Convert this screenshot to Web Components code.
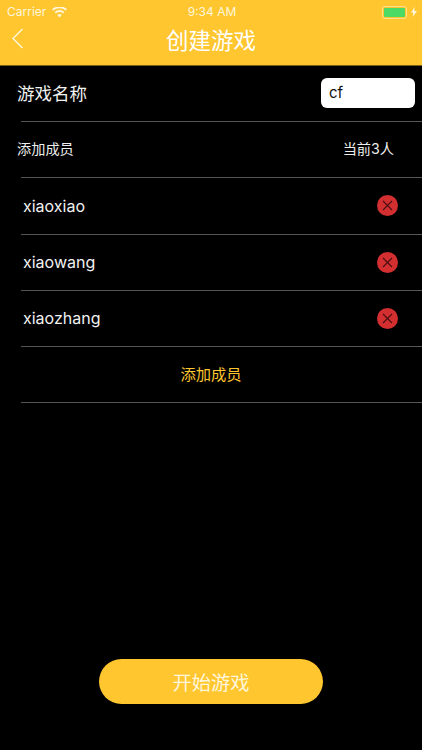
<!DOCTYPE html>
<html lang="zh">
<head>
<meta charset="utf-8">
<title>创建游戏</title>
<style>
  html, body { margin: 0; height: 100%; background: #000; }
  body { font-family: "Inter", "Noto Sans CJK SC", sans-serif; }
</style>
</head>
<body>
<game-screen>
  <nav-bar slot="top" title="创建游戏"></nav-bar>
  <name-row></name-row>
  <count-row count="当前3人"></count-row>
  <member-row name="xiaoxiao"></member-row>
  <member-row name="xiaowang"></member-row>
  <member-row name="xiaozhang"></member-row>
  <add-row></add-row>
  <start-button slot="bottom">开始游戏</start-button>
</game-screen>

<script>
const CJK = '"Noto Sans CJK SC", sans-serif';
const LATIN = '"Inter", "Noto Sans CJK SC", sans-serif';

class GameScreen extends HTMLElement {
  constructor() {
    super();
    this.attachShadow({ mode: 'open' }).innerHTML = `
      <style>
        :host { display: flex; flex-direction: column; height: 750px; background: #000; color: #fff; overflow: hidden; }
        main { flex: 1; display: flex; flex-direction: column; }
        footer { display: flex; justify-content: center; padding-bottom: 46px; }
      </style>
      <slot name="top"></slot>
      <main><slot></slot></main>
      <footer><slot name="bottom"></slot></footer>
    `;
  }
}

class NavBar extends HTMLElement {
  constructor() {
    super();
    this.attachShadow({ mode: 'open' }).innerHTML = `
      <style>
        :host { display: block; height: 65px; background: #ffc62f; color: #fff; border-bottom: 1px solid #7a5f12; }
        .status { height: 22px; display: grid; grid-template-columns: 1fr auto 1fr; align-items: center; padding: 1px 5px 0 7px; font: 12px/22px ${LATIN}; color: #fff6dc; }
        .left { display: flex; align-items: center; gap: 6px; }
        .right { display: flex; justify-content: flex-end; align-items: center; gap: 3px; }
        .battery { width: 21px; height: 9px; border: 1px solid #ffe08a; border-radius: 3px; padding: 1px; display: flex; margin-right: 1px; }
        .battery i { flex: 1; background: #4cd964; border-radius: 1px; }
        .bar { position: relative; height: 37px; display: flex; align-items: center; justify-content: center; }
        .back { position: absolute; left: 11px; top: 5px; }
        h1 { margin: 0 0 5px; font: 400 22.5px/32px ${CJK}; }
      </style>
      <div class="status">
        <div class="left">
          <span>Carrier</span>
          <svg width="15" height="11" viewBox="0 0 15 11"><path d="M7.5 10.5 5.3 8a3.2 3.2 0 0 1 4.4 0zM3.9 6.5 2.6 5a7.2 7.2 0 0 1 9.8 0l-1.3 1.5a5.3 5.3 0 0 0-7.2 0zM1.3 3.6 0 2.2a11 11 0 0 1 15 0l-1.3 1.4a9.1 9.1 0 0 0-12.4 0z" fill="#fff6dc"/></svg>
        </div>
        <span>9:34 AM</span>
        <div class="right">
          <span class="battery"><i></i></span>
          <svg width="6" height="10" viewBox="0 0 6 10"><path d="M3.6 0 0 5.6h2.3L1.7 10 6 4H3.4z" fill="#fff6dc"/></svg>
        </div>
      </div>
      <div class="bar">
        <svg class="back" width="13" height="21" viewBox="0 0 13 21"><path d="M11.5 1 2 10.5 11.5 20" fill="none" stroke="#fff6dc" stroke-width="1.4"/></svg>
        <h1></h1>
      </div>
    `;
  }
  connectedCallback() {
    this.shadowRoot.querySelector('h1').textContent = this.getAttribute('title');
  }
}

class NameRow extends HTMLElement {
  constructor() {
    super();
    this.attachShadow({ mode: 'open' }).innerHTML = `
      <style>
        :host { display: block; }
        .row { height: 55px; display: flex; align-items: center; justify-content: space-between; padding: 0 7px 0 17px; }
        label { font: 400 17.5px/24px ${CJK}; color: #f2f2f2; margin-bottom: 2px; }
        .field { width: 86px; height: 30px; padding-left: 8px; margin-bottom: 2px; background: #fff; border-radius: 6px; color: #111; font: 15px/29px ${LATIN}; }
        hr { margin: 0 0 0 21px; border: 0; height: 1px; background: #555; }
      </style>
      <div class="row"><label>游戏名称</label><div class="field">cf</div></div>
      <hr>
    `;
  }
}

class CountRow extends HTMLElement {
  constructor() {
    super();
    this.attachShadow({ mode: 'open' }).innerHTML = `
      <style>
        :host { display: block; }
        .row { height: 55px; display: flex; align-items: center; justify-content: space-between; padding: 0 28px 0 17px; font: 400 14.2px/20px ${CJK}; color: #eee; }
        span { margin-bottom: 3px; }
        .count { font-family: ${LATIN}; margin-bottom: 1px; }
        hr { margin: 0 0 0 21px; border: 0; height: 1px; background: #555; }
      </style>
      <div class="row"><span>添加成员</span><span class="count"></span></div>
      <hr>
    `;
  }
  connectedCallback() {
    this.shadowRoot.querySelector('.count').textContent = this.getAttribute('count');
  }
}

class MemberRow extends HTMLElement {
  constructor() {
    super();
    this.attachShadow({ mode: 'open' }).innerHTML = `
      <style>
        :host { display: block; }
        .row { height: 55px; display: flex; align-items: center; justify-content: space-between; padding: 0 24px 0 23px; font: 400 16px/22px ${LATIN}; color: #f2f2f2; }
        :host(:first-of-type) .row { height: 56px; }
        .name { margin-bottom: 1px; }
        svg { display: block; margin-bottom: 1px; }
        hr { margin: 0 0 0 21px; border: 0; height: 1px; background: #555; }
      </style>
      <div class="row">
        <span class="name"></span>
        <svg width="21" height="21" viewBox="0 0 21 21">
          <circle cx="10.5" cy="10.5" r="10.5" fill="#d32f30"/>
          <path d="M6 6 15 15M15 6 6 15" stroke="#4d1012" stroke-width="1.2"/>
        </svg>
      </div>
      <hr>
    `;
  }
  connectedCallback() {
    this.shadowRoot.querySelector('.name').textContent = this.getAttribute('name');
  }
}

class AddRow extends HTMLElement {
  constructor() {
    super();
    this.attachShadow({ mode: 'open' }).innerHTML = `
      <style>
        :host { display: block; }
        .row { height: 55px; display: flex; align-items: center; justify-content: center; font: 400 15.3px/20px ${CJK}; color: #ffc62f; }
        .row span { margin-bottom: 3px; }
        hr { margin: 0 0 0 21px; border: 0; height: 1px; background: #555; }
      </style>
      <div class="row"><span>添加成员</span></div>
      <hr>
    `;
  }
}

class StartButton extends HTMLElement {
  constructor() {
    super();
    this.attachShadow({ mode: 'open' }).innerHTML = `
      <style>
        :host { display: flex; align-items: center; justify-content: center; width: 224px; height: 45px; border-radius: 23px; background: #ffc62f; color: #fff6dc; font: 400 19.3px/24px ${CJK}; }
      </style>
      <slot></slot>
    `;
  }
}

customElements.define('game-screen', GameScreen);
customElements.define('nav-bar', NavBar);
customElements.define('name-row', NameRow);
customElements.define('count-row', CountRow);
customElements.define('member-row', MemberRow);
customElements.define('add-row', AddRow);
customElements.define('start-button', StartButton);
</script>
</body>
</html>
